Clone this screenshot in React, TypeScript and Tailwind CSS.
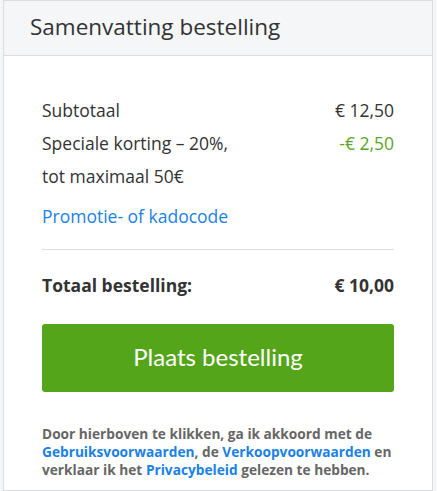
import React from 'react';

const App: React.FC = () => {
  return (
    <div className="min-h-screen bg-[#f5f6f8] pl-[3px] pr-[4px] font-['Open_Sans',sans-serif] text-[#333]">
      <div className="bg-white border border-[#dcdde0] min-h-[491px]">
        <div className="h-[55px] bg-[#f5f6f8] border-b border-[#dcdde0] pl-[26px] flex items-center">
          <h2 className="text-[22.5px] leading-none text-[#333] pb-[1px]">Samenvatting bestelling</h2>
        </div>

        <div className="px-[38px] pt-[38px]">
          <div className="text-[17.5px] leading-[33px]">
            <div className="flex justify-between">
              <span>Subtotaal</span>
              <span>€ 12,50</span>
            </div>
            <div className="flex justify-between">
              <span>
                Speciale korting – 20%,
                <br />
                tot maximaal 50€
              </span>
              <span className="text-[#5aa52a]">-€ 2,50</span>
            </div>
            <a href="#" className="block mt-[7px] text-[#1b81e6]">
              Promotie- of kadocode
            </a>
          </div>

          <div className="mt-[16px] border-t border-[#dcdde0]" />

          <div className="flex justify-between text-[17.5px] font-bold leading-[33px] mt-[19px]">
            <span>Totaal bestelling:</span>
            <span>€ 10,00</span>
          </div>

          <button className="mt-[22px] w-full h-[68px] rounded-[3px] bg-[#55a51b] text-white font-['Lato',sans-serif] text-[24px] leading-none pb-[2px]">
            Plaats bestelling
          </button>

          <p className="mt-[33px] text-[13.7px] leading-[18px] font-bold text-[#666]">
            Door hierboven te klikken, ga ik akkoord met de{' '}
            <a href="#" className="text-[#1b81e6]">Gebruiksvoorwaarden</a>, de{' '}
            <a href="#" className="text-[#1b81e6]">Verkoopvoorwaarden</a> en verklaar ik het{' '}
            <a href="#" className="text-[#1b81e6]">Privacybeleid</a> gelezen te hebben.
          </p>
        </div>
      </div>
    </div>
  );
};

export default App;
